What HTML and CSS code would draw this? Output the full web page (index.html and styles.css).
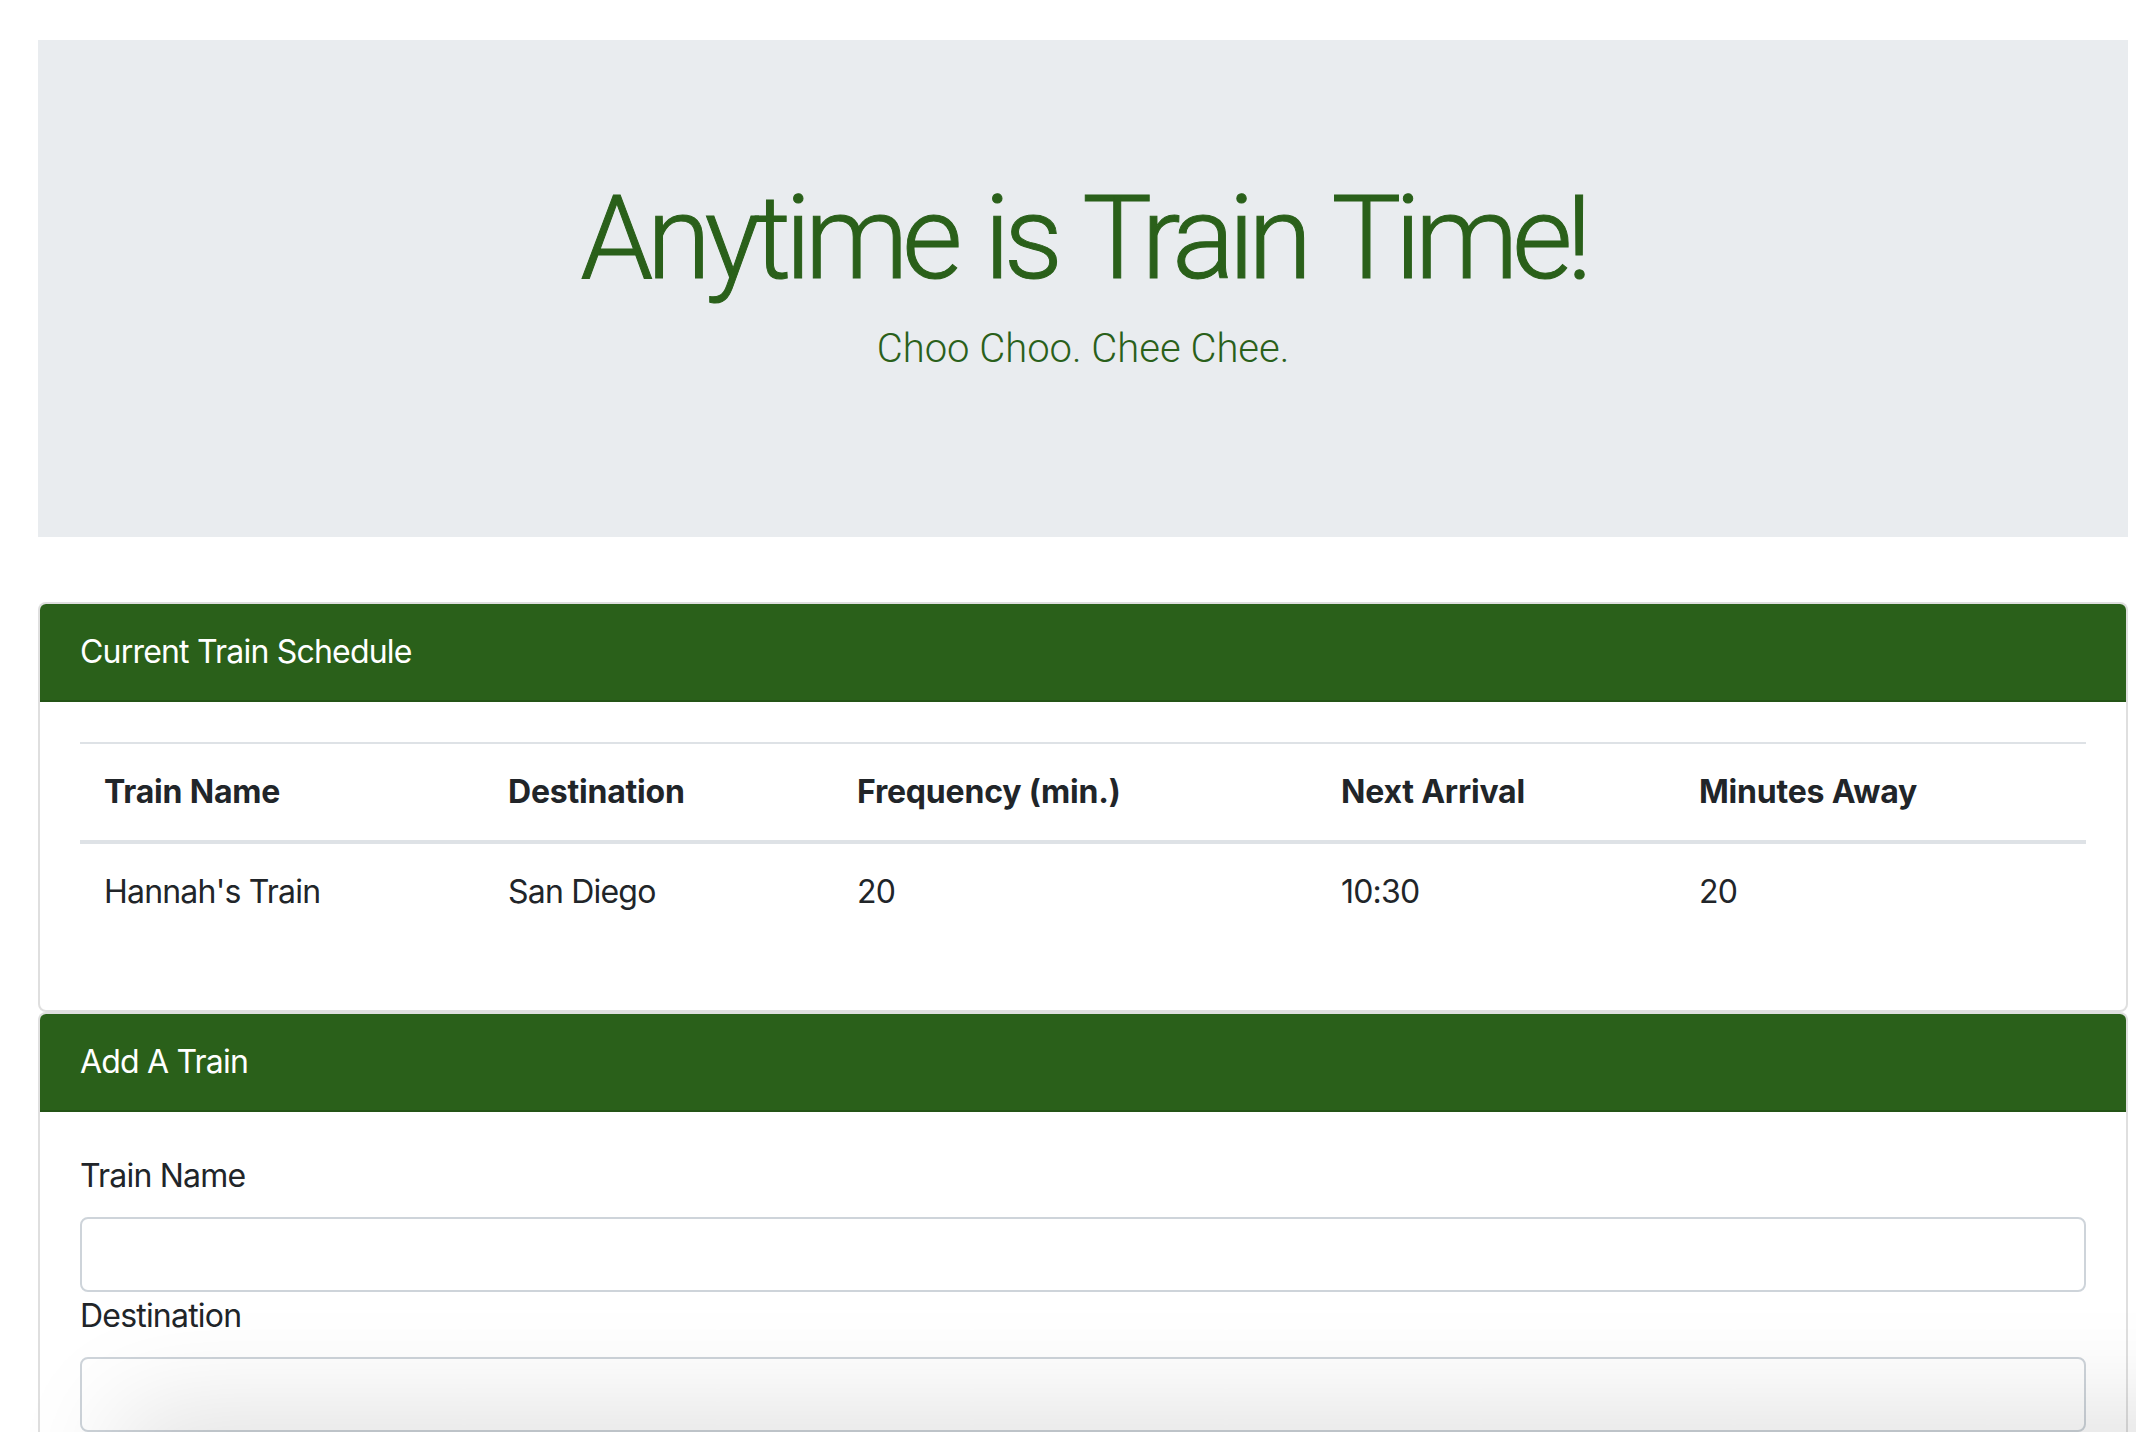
FILE: index.html
```html
<!DOCTYPE html>
<html lang="en">
<head>
<meta charset="utf-8">
<title>Train Scheduler</title>
<link rel="stylesheet" href="styles.css">
</head>
<body>
<div class="page">
  <header class="jumbotron">
    <h1 class="title">Anytime is Train Time!</h1>
    <p class="lead">Choo Choo. Chee Chee.</p>
  </header>

  <section class="card">
    <div class="card-header">Current Train Schedule</div>
    <div class="card-body">
      <table class="table">
        <colgroup>
          <col class="col-name">
          <col class="col-dest">
          <col class="col-freq">
          <col class="col-next">
          <col class="col-away">
        </colgroup>
        <thead>
          <tr>
            <th>Train Name</th>
            <th>Destination</th>
            <th>Frequency (min.)</th>
            <th>Next Arrival</th>
            <th>Minutes Away</th>
          </tr>
        </thead>
        <tbody>
          <tr>
            <td>Hannah's Train</td>
            <td>San Diego</td>
            <td>20</td>
            <td>10:30</td>
            <td>20</td>
          </tr>
        </tbody>
      </table>
    </div>
  </section>

  <section class="card card-form">
    <div class="card-header">Add A Train</div>
    <div class="card-body">
      <form class="form">
        <label class="label" for="train-name">Train Name</label>
        <input class="input" id="train-name" type="text">
        <label class="label" for="destination">Destination</label>
        <input class="input" id="destination" type="text">
      </form>
    </div>
  </section>
</div>
<div class="bottom-shadow"></div>
</body>
</html>
```

FILE: styles.css
```css
html, body {
  margin: 0;
  padding: 0;
  background: #ffffff;
}

body {
  font-family: Inter, "Liberation Sans", sans-serif;
  color: #212529;
  font-size: 32px;
  line-height: 48px;
  letter-spacing: -0.8px;
  overflow: hidden;
  height: 1432px;
}

.page {
  padding: 40px 8px 0 38px;
}

.jumbotron {
  background: #e9ecef;
  height: 497px;
  box-sizing: border-box;
  padding-top: 128px;
  text-align: center;
  color: #2a601a;
}

.title {
  margin: 0;
  font-family: Roboto, Inter, sans-serif;
  font-size: 117px;
  line-height: 140px;
  font-weight: 300;
  letter-spacing: -6.5px;
  word-spacing: 6px;
  -webkit-text-stroke: 1px #2a601a;
}

.lead {
  margin: 11px 0 0;
  font-family: Roboto, Inter, sans-serif;
  font-size: 40px;
  line-height: 60px;
  font-weight: 300;
  letter-spacing: 0;
}

.card {
  border: 2px solid rgba(0, 0, 0, 0.125);
  border-radius: 8px;
  background: #fff;
  overflow: hidden;
}

.jumbotron + .card {
  margin-top: 65px;
}

.card-header {
  background: #2a601a;
  color: #fff;
  padding: 24px 40px;
  font-size: 32px;
  line-height: 48px;
  border-bottom: 2px solid rgba(0, 0, 0, 0.125);
}

.card-body {
  padding: 40px;
}

.table {
  width: 100%;
  table-layout: fixed;
  border-collapse: collapse;
  margin-bottom: 30px;
}

.col-name { width: 404px; }
.col-dest { width: 349px; }
.col-freq { width: 484px; }
.col-next { width: 358px; }
.col-away { width: 411px; }

.table th,
.table td {
  text-align: left;
  padding: 24px;
  border-top: 2px solid #dee2e6;
  vertical-align: top;
  white-space: nowrap;
}

.table th {
  font-weight: 700;
  letter-spacing: -0.2px;
  vertical-align: bottom;
  border-bottom: 4px solid #dee2e6;
}

.card-form {
  height: 600px;
}

.form {
  display: flex;
  flex-direction: column;
  align-items: flex-start;
}

.label {
  margin-bottom: 17px;
}

.input {
  box-sizing: border-box;
  width: 100%;
  height: 75px;
  border: 2px solid #ced4da;
  border-radius: 8px;
  padding: 12px 24px;
  font: inherit;
  background: #fff;
  margin: 0;
}

.bottom-shadow {
  position: fixed;
  left: 140px;
  right: -200px;
  bottom: -80px;
  height: 80px;
  background: #fff;
  box-shadow: 0 0 110px 20px rgba(0, 0, 0, 0.13);
  pointer-events: none;
}
```
